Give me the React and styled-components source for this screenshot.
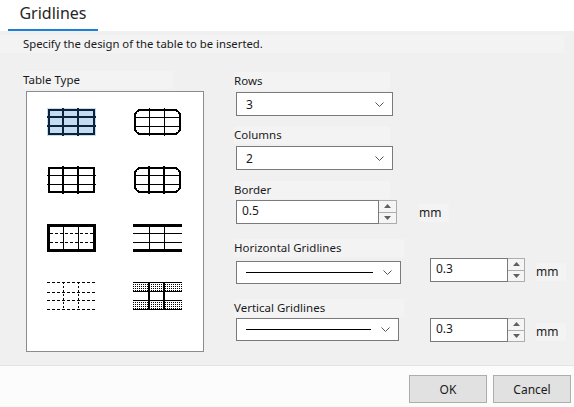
import React from 'react';
import styled, { createGlobalStyle } from 'styled-components';

const GlobalStyle = createGlobalStyle`
  html, body {
    margin: 0;
    padding: 0;
    background: #f0f0f0;
  }
  body {
    font-family: "Noto Sans", "Open Sans", sans-serif;
    font-size: 12px;
    color: #1a1a1a;
  }
`;

const Dialog = styled.div`
  width: 574px;
  height: 407px;
  display: flex;
  flex-direction: column;
  overflow: hidden;
`;

const Header = styled.div`
  height: 31px;
  background: #fff;
  display: flex;
  align-items: flex-end;
  padding-left: 8px;
  box-sizing: border-box;
`;

const Tab = styled.div`
  width: 90px;
  height: 31px;
  box-sizing: border-box;
  border-bottom: 2px solid #1e7fd6;
  font-size: 16px;
  line-height: 26px;
  text-align: center;
  color: #262626;
`;

const Body = styled.div`
  flex: 1;
  background: #f0f0f0;
  padding: 4px 0 0 0;
`;

const Description = styled.div`
  height: 18px;
  line-height: 18px;
  padding-left: 23px;
  font-size: 11.3px;
  background: #f3f3f3;
  margin-right: 10px;
`;

const Content = styled.div`
  display: flex;
  padding-left: 23px;
  margin-top: 18px;
`;

const LeftCol = styled.div`
  width: 181px;
  display: flex;
  flex-direction: column;
`;

const Label = styled.div`
  height: 18px;
  line-height: 18px;
  font-size: 11.5px;
  background: #f3f3f3;
  width: ${p => p.$w || 'auto'};
`;

const TypeBox = styled.div`
  margin-top: 2px;
  margin-left: 3px;
  width: 178px;
  height: 261px;
  box-sizing: border-box;
  border: 1px solid #8c8c8c;
  background: #fff;
  display: grid;
  grid-template-columns: 86px 86px;
  grid-auto-rows: 58px;
  padding: 16px 0 0 20px;
`;

const TypeCell = styled.div`
  display: flex;
  align-items: flex-start;
  justify-content: flex-start;
  svg {
    display: block;
  }
`;

const RightCol = styled.div`
  margin-left: 32px;
  display: flex;
  flex-direction: column;
`;

const Field = styled.div`
  margin-top: ${p => p.$top || 0}px;
  display: flex;
  flex-direction: column;
`;

const FieldLabel = styled(Label)`
  margin-left: -2px;
  width: ${p => p.$w || '156px'};
  margin-bottom: ${p => p.$gap ?? 2}px;
`;

const Row = styled.div`
  display: flex;
  align-items: flex-start;
`;

const Select = styled.div`
  width: ${p => p.$w}px;
  height: ${p => p.$h || 24}px;
  margin-top: ${p => p.$offset || 0}px;
  box-sizing: border-box;
  border: 1px solid #7a7a7a;
  background: #fff;
  display: flex;
  align-items: center;
  padding: 0 8px 0 9px;
  font-size: 12px;
`;

const SelectValue = styled.span`
  flex: 1;
`;

const LineSample = styled.span`
  flex: 1;
  height: 1px;
  background: #000;
  margin-right: 10px;
`;

const Chevron = styled.svg`
  width: 9px;
  height: 5px;
  flex: 0 0 auto;
`;

const Spin = styled.div`
  display: flex;
  margin-left: ${p => p.$ml || 0}px;
`;

const SpinInput = styled.div`
  width: ${p => p.$w}px;
  height: 24px;
  box-sizing: border-box;
  border: 1px solid #7a7a7a;
  background: #fff;
  padding: 2px 0 0 5px;
  font-size: 12px;
  line-height: 16px;
`;

const SpinButtons = styled.div`
  width: ${p => p.$w}px;
  height: 24px;
  box-sizing: border-box;
  border: 1px solid #adadad;
  border-left: none;
  display: flex;
  flex-direction: column;
  background: #fff;
`;

const SpinButton = styled.div`
  flex: 1;
  display: flex;
  align-items: center;
  justify-content: center;
  border-top: ${p => (p.$down ? '1px solid #adadad' : 'none')};
  background: #f5f5f5;
  svg {
    width: 7px;
    height: 4px;
  }
`;

const Unit = styled.span`
  margin-left: ${p => p.$ml}px;
  margin-top: ${p => p.$mt || 0}px;
  font-size: 12px;
  line-height: 18px;
  padding-right: 8px;
  background: #f3f3f3;
`;

const Footer = styled.div`
  height: 42px;
  box-sizing: border-box;
  background: #fcfcfc;
  border-top: 1px solid #e3e3e3;
  display: flex;
  justify-content: flex-end;
  align-items: flex-start;
  gap: 6px;
  padding: 9px 3px 0 0;
`;

const Button = styled.button`
  width: 78px;
  height: 28px;
  background: #e1e1e1;
  border: 1px solid #adadad;
  font-family: "Noto Sans", "Open Sans", sans-serif;
  font-size: 12px;
  color: #1a1a1a;
  padding: 0;
`;

const ChevronIcon = () => (
  <Chevron viewBox="0 0 9 5">
    <path d="M0.5 0.5 L4.5 4.5 L8.5 0.5" fill="none" stroke="#555" strokeWidth="1" />
  </Chevron>
);

const Arrow = ({ down }) => (
  <svg viewBox="0 0 7 4">
    <path d={down ? 'M0 0 L7 0 L3.5 4 Z' : 'M0 4 L7 4 L3.5 0 Z'} fill="#606060" />
  </svg>
);

const SpinBox = ({ value, inputW, btnW, ml }) => (
  <Spin $ml={ml}>
    <SpinInput $w={inputW}>{value}</SpinInput>
    <SpinButtons $w={btnW}>
      <SpinButton>
        <Arrow />
      </SpinButton>
      <SpinButton $down>
        <Arrow down />
      </SpinButton>
    </SpinButtons>
  </Spin>
);

// table type previews, all 49x28
const V = [16, 31];
const H = [9, 18];

const Lines = ({ vw = 1, hw = 1, vDash, hDash, color = '#000', y0 = 0, y1 = 28, x0 = 0, x1 = 49 }) => (
  <>
    {V.map(x => (
      <line
        key={'v' + x}
        x1={x + (vw % 2 ? 0.5 : 0)}
        x2={x + (vw % 2 ? 0.5 : 0)}
        y1={y0}
        y2={y1}
        stroke={color}
        strokeWidth={vw}
        strokeDasharray={vDash}
      />
    ))}
    {H.map(y => (
      <line
        key={'h' + y}
        x1={x0}
        x2={x1}
        y1={y + (hw % 2 ? 0.5 : 0)}
        y2={y + (hw % 2 ? 0.5 : 0)}
        stroke={color}
        strokeWidth={hw}
        strokeDasharray={hDash}
      />
    ))}
  </>
);

const Preview = ({ children }) => (
  <svg width="49" height="28" viewBox="0 0 49 28" shapeRendering="crispEdges">
    {children}
  </svg>
);

const TypeSelected = () => (
  <Preview>
    <rect x="0" y="0" width="49" height="28" fill="#c3dcf2" />
    <rect x="2" y="2" width="45" height="24" fill="none" stroke="#0d2238" strokeWidth="2" />
    <Lines vw={2} hw={2} color="#0d2238" />
  </Preview>
);

const TypeRounded = ({ vw }) => (
  <Preview>
    <rect x="2" y="2" width="45" height="24" rx="6" fill="#fff" stroke="#000" strokeWidth="2" />
    <Lines vw={vw} hw={1} x0={2} x1={47} />
  </Preview>
);

const TypeBoxed = () => (
  <Preview>
    <rect x="2" y="2" width="45" height="24" fill="#fff" stroke="#000" strokeWidth="2" />
    <Lines vw={2} hw={1} />
  </Preview>
);

const TypeThickDashed = () => (
  <Preview>
    <Lines vw={1} hw={1} hDash="3 2" x0={3} x1={46} />
    <rect x="1.5" y="1.5" width="46" height="25" fill="none" stroke="#000" strokeWidth="3" />
  </Preview>
);

const TypeOpen = () => (
  <Preview>
    <Lines vw={1} hw={1} />
    <rect x="0" y="0" width="49" height="3" fill="#000" />
    <rect x="0" y="25" width="49" height="3" fill="#000" />
  </Preview>
);

const TypeDotted = () => (
  <Preview>
    {[0, 10, 18, 27].map(y => (
      <line key={y} x1="0" x2="49" y1={y + 0.5} y2={y + 0.5} stroke="#000" strokeDasharray="3 2" />
    ))}
    {V.map(x => (
      <line key={x} x1={x + 0.5} x2={x + 0.5} y1="0" y2="28" stroke="#000" strokeDasharray="2 2" />
    ))}
  </Preview>
);

const TypeShaded = () => (
  <Preview>
    <defs>
      <pattern id="dots" width="2" height="2" patternUnits="userSpaceOnUse">
        <rect width="2" height="2" fill="#fff" />
        <rect width="1" height="1" fill="#000" />
      </pattern>
    </defs>
    <rect x="0" y="0" width="49" height="9" fill="url(#dots)" />
    <rect x="0" y="18" width="49" height="10" fill="url(#dots)" />
    {[0, 9, 18, 27].map(y => (
      <line key={y} x1="0" x2="49" y1={y + 0.5} y2={y + 0.5} stroke="#000" />
    ))}
    <Lines vw={2} hw={0} />
  </Preview>
);

const types = [
  <TypeSelected />,
  <TypeRounded vw={1} />,
  <TypeBoxed />,
  <TypeRounded vw={2} />,
  <TypeThickDashed />,
  <TypeOpen />,
  <TypeDotted />,
  <TypeShaded />,
];

const App = () => {
  return (
    <Dialog>
      <GlobalStyle />
      <Header>
        <Tab>Gridlines</Tab>
      </Header>
      <Body>
        <Description>Specify the design of the table to be inserted.</Description>
        <Content>
          <LeftCol>
            <Label $w="150px">Table Type</Label>
            <TypeBox>
              {types.map((t, i) => (
                <TypeCell key={i}>{t}</TypeCell>
              ))}
            </TypeBox>
          </LeftCol>
          <RightCol>
            <Field $top={1}>
              <FieldLabel>Rows</FieldLabel>
              <Select $w={157}>
                <SelectValue>3</SelectValue>
                <ChevronIcon />
              </Select>
            </Field>
            <Field $top={10}>
              <FieldLabel>Columns</FieldLabel>
              <Select $w={157}>
                <SelectValue>2</SelectValue>
                <ChevronIcon />
              </Select>
            </Field>
            <Field $top={11}>
              <FieldLabel $gap={1}>Border</FieldLabel>
              <Row>
                <SpinBox value="0.5" inputW={143} btnW={18} />
                <Unit $ml={22} $mt={4}>mm</Unit>
              </Row>
            </Field>
            <Field $top={15}>
              <FieldLabel $w="170px" $gap={1}>Horizontal Gridlines</FieldLabel>
              <Row>
                <Select $w={165} $h={23} $offset={3}>
                  <LineSample />
                  <ChevronIcon />
                </Select>
                <SpinBox value="0.3" inputW={78} btnW={17} ml={29} />
                <Unit $ml={11} $mt={5}>mm</Unit>
              </Row>
            </Field>
            <Field $top={15}>
              <FieldLabel $w="170px" $gap={1}>Vertical Gridlines</FieldLabel>
              <Row>
                <Select $w={163} $h={23}>
                  <LineSample />
                  <ChevronIcon />
                </Select>
                <SpinBox value="0.3" inputW={78} btnW={17} ml={31} />
                <Unit $ml={11} $mt={5}>mm</Unit>
              </Row>
            </Field>
          </RightCol>
        </Content>
      </Body>
      <Footer>
        <Button>OK</Button>
        <Button>Cancel</Button>
      </Footer>
    </Dialog>
  );
};

export default App;
